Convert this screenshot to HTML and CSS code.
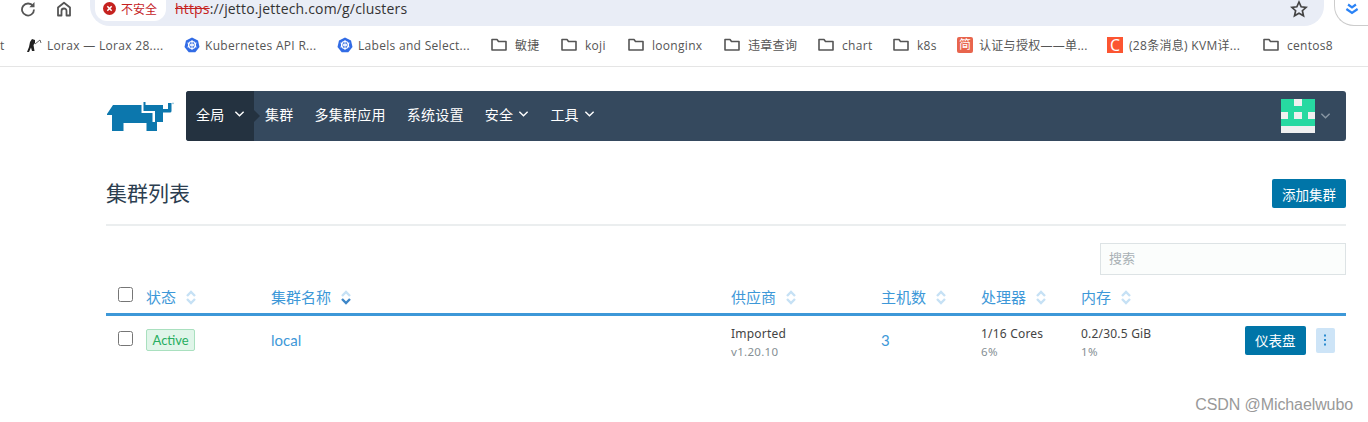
FILE: index.html
```html
<!DOCTYPE html>
<html lang="zh-CN">
<head>
    <meta charset="UTF-8">
    <title>集群列表</title>
    <link rel="stylesheet" href="styles.css">
</head>
<body>
    <div class="topbar">
        <svg class="tool-icon reload" viewBox="0 0 16 16"><path d="M13 5.200A6 6 0 1 0 14 8.500" fill="none" stroke="#555" stroke-width="1.800"/><path d="M14.500 1v5.200H9.300z" fill="#555"/></svg>
        <svg class="tool-icon home" viewBox="0 0 16 16"><path d="M2 14.500V6.500L8 1.800l6 4.700v8h-3.500V10a2.500 2.500 0 0 0-5 0v4.500z" fill="none" stroke="#555" stroke-width="1.800" stroke-linejoin="round"/></svg>
        <div class="omnibox">
            <div class="security">
                <svg class="warn" viewBox="0 0 12 12"><circle cx="6" cy="6" r="6" fill="#c5221f"/><path d="M4 4l4 4M8 4l-4 4" stroke="#fff" stroke-width="1.400"/></svg>
                <span>不安全</span>
            </div>
            <div class="url"><span class="scheme">https</span>://jetto.jettech.com/g/clusters</div>
            <svg class="star" viewBox="0 0 16 16"><path d="M8 1.800l1.900 4.200 4.500.5-3.400 3 1 4.500L8 11.700 4 14l1-4.500-3.400-3 4.500-.5z" fill="none" stroke="#444" stroke-width="1.500"/></svg>
        </div>
        <div class="ext">
            <svg viewBox="0 0 16 16"><path d="M3 8l5 3.500L13 8M4.500 4L8 6.500 11.500 4" fill="none" stroke="#2b83f6" stroke-width="2"/></svg>
        </div>
    </div>

    <div class="bookmarks">
        <div class="bm"><span>t</span></div>
        <div class="bm"><svg class="bm-icon" viewBox="0 0 16 16"><path d="M1 15l2-5 1-5 2-3 3 1v3L7.500 8l1 6H6L5 10.500 3 15z" fill="#222"/><path d="M9 7l5-4 1 3" fill="none" stroke="#666"/></svg><span>Lorax — Lorax 28....</span></div>
        <div class="bm"><svg class="bm-icon" viewBox="0 0 16 16"><path d="M8 .500l6 2.900 1.500 6.500-4.200 5.300H4.700L.500 9.900 2 3.400z" fill="#326ce5"/><circle cx="8" cy="8" r="3.500" fill="none" stroke="#fff" stroke-width="1.200"/><path d="M8 3v10M3.500 6l9 4M12.500 6l-9 4" stroke="#fff"/></svg><span>Kubernetes API R...</span></div>
        <div class="bm"><svg class="bm-icon" viewBox="0 0 16 16"><path d="M8 .500l6 2.900 1.500 6.500-4.200 5.300H4.700L.500 9.900 2 3.400z" fill="#326ce5"/><circle cx="8" cy="8" r="3.500" fill="none" stroke="#fff" stroke-width="1.200"/><path d="M8 3v10M3.500 6l9 4M12.500 6l-9 4" stroke="#fff"/></svg><span>Labels and Select...</span></div>
        <div class="bm"><svg class="bm-icon folder" viewBox="0 0 16 16"><path d="M1 2.500h5l1.500 2H15v8.500H1z"/></svg><span>敏捷</span></div>
        <div class="bm"><svg class="bm-icon folder" viewBox="0 0 16 16"><path d="M1 2.500h5l1.500 2H15v8.500H1z"/></svg><span>koji</span></div>
        <div class="bm"><svg class="bm-icon folder" viewBox="0 0 16 16"><path d="M1 2.500h5l1.500 2H15v8.500H1z"/></svg><span>loonginx</span></div>
        <div class="bm"><svg class="bm-icon folder" viewBox="0 0 16 16"><path d="M1 2.500h5l1.500 2H15v8.500H1z"/></svg><span>违章查询</span></div>
        <div class="bm"><svg class="bm-icon folder" viewBox="0 0 16 16"><path d="M1 2.500h5l1.500 2H15v8.500H1z"/></svg><span>chart</span></div>
        <div class="bm"><svg class="bm-icon folder" viewBox="0 0 16 16"><path d="M1 2.500h5l1.500 2H15v8.500H1z"/></svg><span>k8s</span></div>
        <div class="bm"><span class="fav fav-jian">简</span><span>认证与授权——单...</span></div>
        <div class="bm"><span class="fav fav-c">C</span><span>(28条消息) KVM详...</span></div>
        <div class="bm"><svg class="bm-icon folder" viewBox="0 0 16 16"><path d="M1 2.500h5l1.500 2H15v8.500H1z"/></svg><span>centos8</span></div>
    </div>

    <div class="page">
        <header class="app-header">
            <svg class="logo" viewBox="0 0 68 31">
                <path fill="#0c77ad" d="M1 13L7 4h28.500v8h11v9h4.500v9h-10.500v-8H17.500v8H6V14H1z"/>
                <path fill="#0c77ad" d="M37.500 1h2v3h17.500v17h-8V10H37.500z"/>
                <path fill="#0c77ad" d="M57 8h5V2h3.500v8q0 1.500-1.500 1.500h-7z"/>
                <circle cx="67" cy="2.300" r=".9" fill="#8fc3dc"/>
            </svg>
            <nav class="navbar">
                <a class="nav-item active">全局<svg class="chev chev-wide" viewBox="0 0 12 8"><path d="M1.500 1.500L6 6l4.500-4.500"/></svg></a>
                <a class="nav-item">集群</a>
                <a class="nav-item">多集群应用</a>
                <a class="nav-item">系统设置</a>
                <a class="nav-item">安全<svg class="chev" viewBox="0 0 12 8"><path d="M1.500 1.500L6 6l4.500-4.500"/></svg></a>
                <a class="nav-item">工具<svg class="chev" viewBox="0 0 12 8"><path d="M1.500 1.500L6 6l4.500-4.500"/></svg></a>
                <div class="user">
                    <svg class="avatar" viewBox="0 0 34 34"><rect width="34" height="34" fill="#f0f0f0"/><rect width="34" height="27" fill="#27d9a1"/><path d="M13 0h8v7h-8zM0 13h7v7H0zM13 13h8v7h-8zM27 13h7v7h-7z" fill="#f0f0f0"/></svg>
                    <svg class="chev chev-user" viewBox="0 0 12 8"><path d="M1.500 1.500L6 6l4.500-4.500"/></svg>
                </div>
            </nav>
        </header>

        <div class="title-row">
            <h1>集群列表</h1>
            <button class="btn">添加集群</button>
        </div>

        <div class="search-row">
            <input class="search" type="text" placeholder="搜索">
        </div>

        <div class="grid head">
            <div><span class="check"></span></div>
            <div>状态<svg class="sort" viewBox="0 0 10 15"><path d="M1 6L5 2l4 4M1 9l4 4 4-4"/></svg></div>
            <div>集群名称<svg class="sort" viewBox="0 0 10 15"><path d="M1 6L5 2l4 4"/><path class="on" d="M1 9l4 4 4-4"/></svg></div>
            <div>供应商<svg class="sort" viewBox="0 0 10 15"><path d="M1 6L5 2l4 4M1 9l4 4 4-4"/></svg></div>
            <div>主机数<svg class="sort" viewBox="0 0 10 15"><path d="M1 6L5 2l4 4M1 9l4 4 4-4"/></svg></div>
            <div>处理器<svg class="sort" viewBox="0 0 10 15"><path d="M1 6L5 2l4 4M1 9l4 4 4-4"/></svg></div>
            <div>内存<svg class="sort" viewBox="0 0 10 15"><path d="M1 6L5 2l4 4M1 9l4 4 4-4"/></svg></div>
            <div></div>
        </div>

        <div class="grid row">
            <div><span class="check"></span></div>
            <div><span class="badge">Active</span></div>
            <div><a class="link">local</a></div>
            <div class="stat"><div class="main">Imported</div><div class="sub">v1.20.10</div></div>
            <div><a class="link">3</a></div>
            <div class="stat"><div class="main">1/16 Cores</div><div class="sub">6%</div></div>
            <div class="stat"><div class="main">0.2/30.5 GiB</div><div class="sub">1%</div></div>
            <div class="actions">
                <button class="btn">仪表盘</button>
                <button class="kebab"><svg viewBox="0 0 4 12"><path d="M1 .500h2v2H1zM1 5h2v2H1zM1 9.500h2v2H1z"/></svg></button>
            </div>
        </div>
    </div>

    <div class="watermark">CSDN @Michaelwubo</div>
</body>
</html>
```

FILE: styles.css
```css
html, body {
    margin: 0;
    padding: 0;
    height: 422px;
    overflow: hidden;
    background: #fff;
    font-family: "Lato", "Noto Sans CJK SC", sans-serif;
    color: #333;
}

/* browser chrome */
.topbar {
    display: flex;
    align-items: flex-start;
    height: 26px;
    padding-left: 20px;
}

.tool-icon {
    width: 16px;
    height: 16px;
    margin-top: 1px;
}

.reload {
    margin-right: 20px;
}

.home {
    margin-right: 18px;
}

.omnibox {
    display: flex;
    align-items: flex-start;
    flex: none;
    width: 1234px;
    height: 26px;
    background: #e9edf6;
    border-radius: 0 0 20px 20px;
}

.security {
    display: flex;
    align-items: center;
    gap: 5px;
    height: 21px;
    margin-left: 5px;
    padding: 0 9px 4px 8px;
    box-sizing: border-box;
    background: #fff;
    border-radius: 0 0 12px 12px;
    font: 12px "Noto Sans CJK SC", sans-serif;
    color: #c5221f;
}

.warn {
    width: 13px;
    height: 13px;
}

.url {
    flex: 1;
    margin-left: 9px;
    font: 14px/17px "Open Sans", sans-serif;
    letter-spacing: .17px;
    color: #333;
}

.scheme {
    color: #c5221f;
    text-decoration: line-through;
}

.star {
    width: 18px;
    height: 18px;
    margin-right: 16px;
}

.ext {
    display: flex;
    justify-content: center;
    flex: none;
    width: 34px;
    height: 26px;
    margin-left: 10px;
    box-sizing: border-box;
    border-left: 1px solid #ccc;
    border-bottom: 1px solid #ccc;
    border-radius: 0 0 0 20px;
}

.ext svg {
    width: 18px;
    height: 18px;
}

.bookmarks {
    display: grid;
    grid-template-columns: 26px 158px 153px 154px 70px 67px 96px 94px 75px 64px 150px 156px 1fr;
    align-items: center;
    height: 41px;
    padding-bottom: 2px;
    box-sizing: border-box;
    border-bottom: 1px solid #e5e5e5;
    font: 12px "Open Sans", "Noto Sans CJK SC", sans-serif;
    letter-spacing: .3px;
    color: #555;
    white-space: nowrap;
}

.bm {
    display: flex;
    align-items: center;
    gap: 5px;
}

.bm-icon {
    flex: none;
    width: 16px;
    height: 16px;
}

.folder {
    margin-right: 3px;
    fill: none;
    stroke: #555;
    stroke-width: 1.600;
    stroke-linejoin: round;
}

.fav {
    flex: none;
    width: 16px;
    height: 16px;
    margin-right: 1px;
    line-height: 16px;
    text-align: center;
    letter-spacing: 0;
    color: #fff;
}

.fav-jian {
    background: #e8654d;
    border-radius: 2px;
    font-size: 12px;
}

.fav-c {
    background: #fc5531;
    font-size: 16px;
}

/* rancher page */
.page {
    margin: 24px 22px 0 106px;
}

.app-header {
    display: flex;
    align-items: center;
    height: 50px;
}

.logo {
    flex: none;
    width: 68px;
    height: 31px;
    margin-right: 12px;
}

.navbar {
    display: flex;
    align-items: center;
    flex: 1;
    height: 50px;
    background: #35495e;
    border-radius: 3px;
    font-size: 14px;
    letter-spacing: .2px;
    color: #fff;
}

.nav-item {
    display: flex;
    align-items: center;
    height: 100%;
    margin-right: 21.200px;
    padding-bottom: 4px;
    box-sizing: border-box;
}

.nav-item.active {
    position: relative;
    width: 68px;
    margin-right: 11px;
    padding-left: 10px;
    background: #243240;
    border-radius: 3px 0 0 3px;
}

.nav-item.active::after {
    content: "";
    position: absolute;
    right: -6px;
    top: 19px;
    border-left: 6px solid #243240;
    border-top: 6px solid transparent;
    border-bottom: 6px solid transparent;
}

.chev {
    width: 11px;
    height: 8px;
    margin-left: 5px;
    fill: none;
    stroke: #fff;
    stroke-width: 1.500;
}

.chev-wide {
    margin-left: 10px;
}

.user {
    display: flex;
    align-items: center;
    margin-left: auto;
    margin-right: 15px;
}

.avatar {
    width: 34px;
    height: 34px;
}

.chev-user {
    margin-left: 5px;
    stroke: #8896a3;
}

.title-row {
    display: flex;
    align-items: flex-end;
    justify-content: space-between;
    height: 85px;
    padding-bottom: 16px;
    box-sizing: border-box;
    border-bottom: 2px solid #ebeeef;
}

h1 {
    margin: 0;
    font-size: 21px;
    line-height: 30px;
    font-weight: 400;
    color: #2c3e50;
}

.btn {
    height: 29px;
    padding: 0 10px;
    border: none;
    border-radius: 2px;
    background: #0075a8;
    color: #fff;
    font: 13.500px "Noto Sans CJK SC", sans-serif;
}

.search-row {
    display: flex;
    justify-content: flex-end;
    margin-top: 17px;
}

.search {
    width: 246px;
    height: 32px;
    padding: 0 8px 4px;
    box-sizing: border-box;
    border: 1px solid #dde3e5;
    background: #fbfdfc;
    font: 13px "Noto Sans CJK SC", sans-serif;
}

.search::placeholder {
    color: #a9b1b5;
}

.grid {
    display: grid;
    grid-template-columns: 40px 125px 460px 150px 100px 100px 140px 1fr;
    align-items: center;
}

.head {
    height: 38px;
    border-bottom: 3px solid #3d98d8;
    font-size: 15px;
    color: #3d98d8;
}

.head > div {
    display: flex;
    align-items: center;
}

.head > div + div {
    padding-top: 4px;
}

.sort {
    width: 10px;
    height: 15px;
    margin: 3px 0 0 10px;
    fill: none;
    stroke: #c6e1f5;
    stroke-width: 2.400;
}

.sort .on {
    stroke: #3d86c8;
}

.check {
    display: block;
    width: 15px;
    height: 15px;
    margin-left: 12px;
    box-sizing: border-box;
    border: 1px solid #767676;
    border-radius: 2.500px;
}

.row {
    height: 48px;
    font-size: 12px;
}

.row .check {
    margin-top: -3px;
}

.stat {
    padding-top: 5px;
    font-family: "Noto Sans", sans-serif;
}

.badge {
    display: inline-block;
    padding: 0 5.500px;
    line-height: 20px;
    border: 1px solid #a9e0bf;
    border-radius: 2px;
    background: #e0f5e9;
    color: #27ae60;
    font-size: 13px;
}

.link {
    color: #3d98d8;
    font-size: 15px;
}

.main {
    color: #444;
    letter-spacing: .2px;
    line-height: 16px;
}

.sub {
    margin-top: 2px;
    color: #868f94;
    font-size: 11.500px;
    line-height: 16px;
    letter-spacing: .3px;
}

.actions {
    display: flex;
    align-items: center;
    gap: 10px;
    margin-left: 24px;
}

.kebab {
    display: flex;
    align-items: center;
    justify-content: center;
    width: 19px;
    height: 25px;
    padding: 0;
    border: none;
    border-radius: 2px;
    background: #cde4f7;
}

.kebab svg {
    width: 4px;
    height: 12px;
    fill: #2a8bd0;
}

.watermark {
    position: absolute;
    right: 15px;
    top: 396px;
    font: 16px "Liberation Sans", sans-serif;
    letter-spacing: -.1px;
    color: #999;
}
```
